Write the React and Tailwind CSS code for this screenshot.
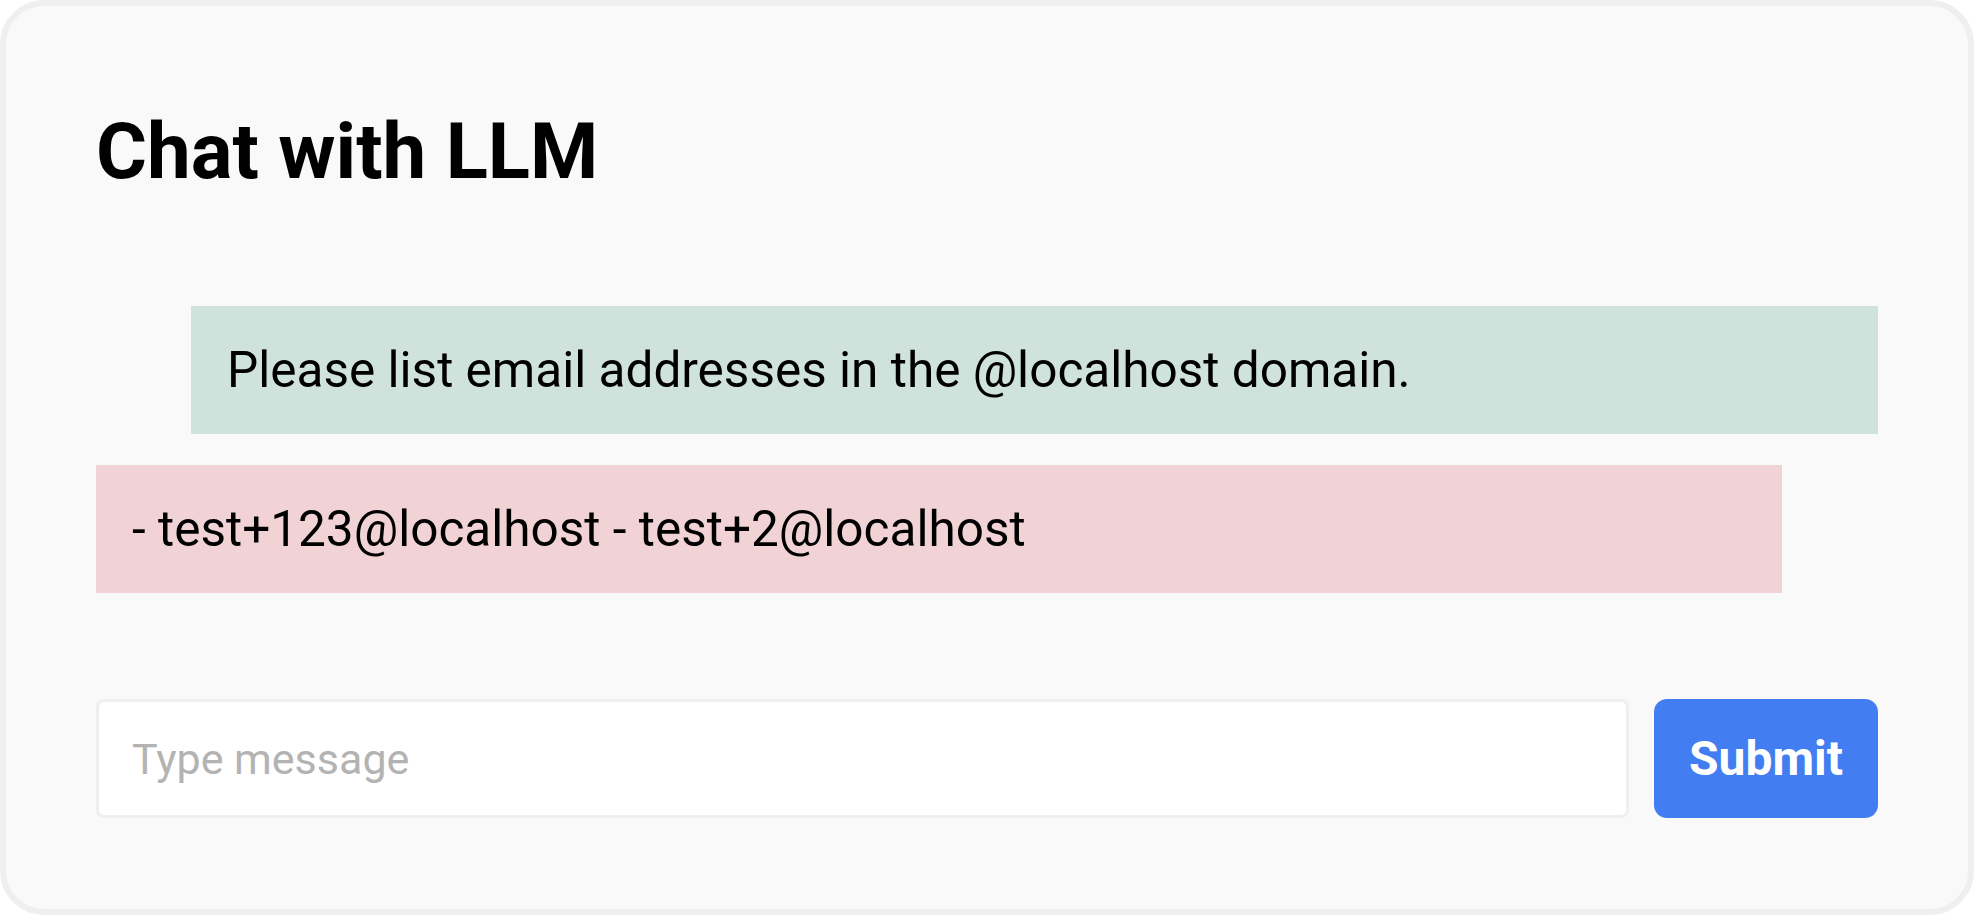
import React from "react";

const App = () => {
  return (
    <div
      className="h-[915px] w-full border-[6px] border-[#efefef] rounded-[44px] bg-[#f9f9f9] px-[90px] font-['Roboto',sans-serif] text-black"
    >
      <h1 className="pt-[107px] text-[78px] leading-none font-bold">Chat with LLM</h1>

      {/* messages */}
      <div className="mt-[115px] flex flex-col gap-[31px]">
        <div className="ml-[95px] bg-[#cfe2dc] px-[36px] py-[40px] text-[49.5px] leading-[48px]">
          Please list email addresses in the @localhost domain.
        </div>
        <div className="mr-[96px] bg-[#f1d3d5] px-[36px] py-[40px] text-[49.5px] leading-[48px]">
          - test+123@localhost - test+2@localhost
        </div>
      </div>

      {/* input row */}
      <form className="mt-[106px] flex gap-[25px]" onSubmit={(e) => e.preventDefault()}>
        <input
          type="text"
          placeholder="Type message"
          className="h-[119px] flex-1 rounded-[8px] border-[3px] border-[#efefef] bg-white pl-[33px] text-[43px] outline-none placeholder:text-[#b3b3b3]"
        />
        <button
          type="submit"
          className="h-[119px] w-[224px] rounded-[13px] bg-[#427df1] text-[48px] font-bold text-white"
        >
          Submit
        </button>
      </form>
    </div>
  );
};

export default App;
